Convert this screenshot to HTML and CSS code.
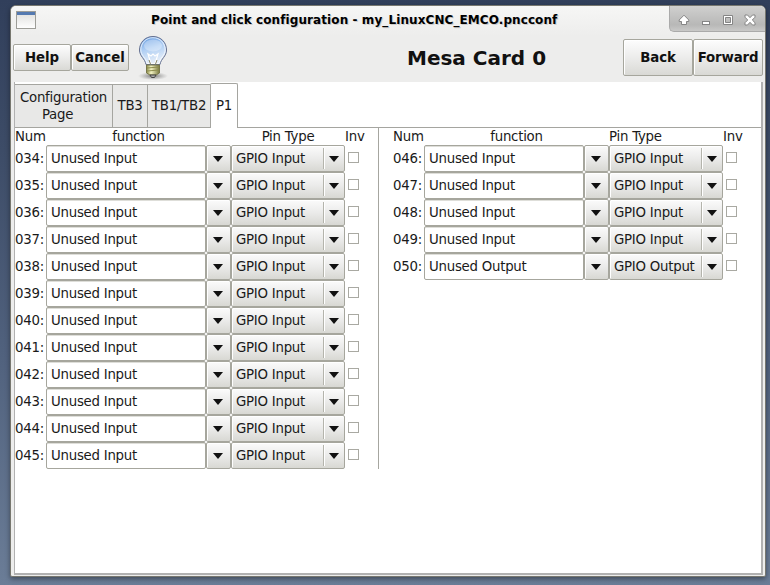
FILE: index.html
```html
<!DOCTYPE html>
<html lang="en">
<head>
<meta charset="utf-8">
<title>Point and click configuration</title>
<link rel="stylesheet" href="styles.css">
</head>
<body>
<div class="window">
  <header class="titlebar">
    <svg class="app-icon" width="20" height="18" viewBox="0 0 20 18">
      <defs><linearGradient id="app" x1="0" y1="0" x2="0" y2="1"><stop offset="0" stop-color="#dcdcda"/><stop offset="1" stop-color="#fff"/></linearGradient></defs>
      <rect x=".5" y=".5" width="19" height="17" fill="url(#app)" stroke="#9d9d98"/>
      <rect x="1" y="1" width="18" height="3" fill="#5479b0"/>
    </svg>
    <h1 class="title"><span>Point and click configuration - my_LinuxCNC_EMCO.pncconf</span></h1>
    <div class="controls">
      <svg width="96" height="26" viewBox="0 0 96 26" fill="#fff" stroke="#858585">
        <path d="M15 9.200 L19.800 14 V15.500 H17.500 V18.500 H12.500 V15.500 H10.200 V14 Z"/>
        <rect x="33.500" y="15.500" width="7" height="3"/>
        <path fill-rule="evenodd" d="M54.500 9.500h9v9h-9zM56.500 11.500v5h5v-5z"/>
        <path d="M76 9h2.500l2.500 2.700 2.500-2.700h2.500v2.200L83.300 14l2.700 2.700V19h-2.500L81 16.300 78.500 19H76v-2.300L78.700 14 76 11.200z"/>
      </svg>
    </div>
  </header>
  <div class="toolbar">
    <button class="btn help">Help</button>
    <button class="btn cancel">Cancel</button>
    <svg class="bulb" width="32" height="46" viewBox="0 0 32 46">
      <defs>
        <linearGradient id="glass" x1="0" y1="0" x2=".3" y2="1"><stop offset="0" stop-color="#5d96df"/><stop offset=".5" stop-color="#b0cff4"/><stop offset="1" stop-color="#e6eef8"/></linearGradient>
        <linearGradient id="base"><stop offset="0" stop-color="#8b8b49"/><stop offset=".35" stop-color="#f4f4c4"/><stop offset="1" stop-color="#77773f"/></linearGradient>
        <radialGradient id="shade"><stop offset="0" stop-color="#777"/><stop offset="1" stop-color="#999" stop-opacity="0"/></radialGradient>
      </defs>
      <ellipse cx="16" cy="41" rx="15" ry="4" fill="url(#shade)"/>
      <path d="M16 1.500C8 1.500 2.500 7.500 2.500 15C2.500 21.500 8 23.500 9 29.500H23C24 23.500 29.500 21.500 29.500 15C29.500 7.500 24 1.500 16 1.500Z" fill="url(#glass)" stroke="#65708f"/>
      <path d="M16 2.700C9 2.700 3.800 8 3.800 15C3.800 20.500 9 22.500 10 28.500H22C23 22.500 28.200 20.500 28.200 15C28.200 8 23 2.700 16 2.700Z" fill="none" stroke="#fff" stroke-opacity=".7"/>
      <ellipse cx="16" cy="10.500" rx="9" ry="6" fill="#fff" opacity=".3"/>
      <path d="M14 29L11 19L14 21L16 19L18 21L21 19L18 29" fill="none" stroke="#fff" stroke-width="1.200"/>
      <path d="M13.500 29L12 25M18.500 29L20 25" stroke="#8a8768"/>
      <path d="M9.500 30H22.500V38L19 40H13L9.500 38Z" fill="url(#base)" stroke="#77774a"/>
      <path d="M10 33L22 32M10 36L22 35" stroke="#8d8d4d"/>
      <path d="M13 40H19L17.500 42.500H14.500Z" fill="#aaa" stroke="#444"/>
    </svg>
    <h2 class="page-title"><span>Mesa Card 0</span></h2>
    <button class="btn back">Back</button>
    <button class="btn forward">Forward</button>
  </div>
  <main class="notebook">
    <nav class="tabs">
      <div class="tab config">Configuration<br>Page&nbsp; &nbsp;</div>
      <div class="tab tb3">TB3</div>
      <div class="tab tb12">TB1/TB2</div>
      <div class="tab active">P1</div>
      <div class="rest"></div>
    </nav>
    <div class="pages">
      <section class="pins" data-first="34" data-count="12"></section>
      <section class="pins second" data-first="46" data-count="5"></section>
    </div>
  </main>
</div>
<script src="pins.js"></script>
</body>
</html>
```
FILE: styles.css
```css
* { box-sizing: border-box; }
body {
  margin: 0;
  width: 770px;
  height: 585px;
  overflow: hidden;
  padding: 5px 0 0 10px;
  background: linear-gradient(180deg, #313f5b 0, #3d4c67 150px, #50617d 350px, #6b7d97 585px);
  font: 13.330px/17px "DejaVu Sans", sans-serif;
  letter-spacing: -.25px;
  color: #1a1a1a;
}
.window {
  width: 756px;
  height: 572px;
  border: 1px solid #77776f;
  border-radius: 6px 6px 2px 2px;
  background: #ededec;
  box-shadow: 0 2px 5px rgba(0, 0, 0, .4);
  overflow: hidden;
}
.titlebar {
  display: flex;
  height: 30px;
  background: linear-gradient(#f6f6f5, #ededec);
}
.app-icon { margin: 5px 0 0 5px; flex: none; }
.title {
  flex: 1;
  margin: 0;
  padding: 6px 0 0 115px;
  font-size: 12px;
  line-height: 17px;
  letter-spacing: .09px;
  white-space: nowrap;
  color: #000;
  text-shadow: 1px 1px #ccc;
}
.controls {
  width: 96px;
  height: 26px;
  flex: none;
  background: linear-gradient(#d0d0cf, #b8b8b7 75%, #c9c9c8);
  border: solid #aaa;
  border-width: 0 0 1px 1px;
  border-radius: 0 0 0 5px;
}
.controls svg { display: block; margin-left: -1px; }
.toolbar { display: flex; height: 46px; padding-left: 2px; }
.btn {
  font: bold 13.330px/17px "DejaVu Sans", sans-serif;
  letter-spacing: -.08px;
  color: #111;
  padding: 0;
  border: 1px solid #a6a69d;
  border-radius: 2px;
  background: linear-gradient(#fdfdfd, #ececeb 50%, #d9d9d5);
  box-shadow: inset 1px 1px #fff;
  flex: none;
}
.help, .cancel { width: 58px; height: 27px; margin-top: 8px; }
.bulb { margin: -1px 0 0 8px; flex: none; }
.page-title {
  flex: 1;
  margin: 0;
  padding: 9px 0 0 238px;
  font-size: 20px;
  line-height: 26px;
  letter-spacing: 0;
  white-space: nowrap;
  color: #111;
}
.back, .forward { height: 37px; margin-top: 3px; width: 70px; letter-spacing: -.15px; }
.forward { margin-right: 2px; }
.notebook {
  height: 493px;
  margin: 0 2px 0 3px;
  background: #fff;
  border: solid #b1b1b1;
  border-width: 0 2px 2px 1px;
}
.tabs { display: flex; height: 46px; align-items: flex-end; }
.tab {
  height: 44px;
  border: solid #a5a5a0;
  border-width: 1px 0 1px 1px;
  background: #e8e8e7;
  display: flex;
  align-items: center;
  justify-content: center;
  text-align: center;
}
.config { width: 97px; border-left: 0; }
.tb3 { width: 35px; }
.tb12 { width: 63px; }
.tab.active { width: 28px; height: 45px; background: #fff; border-width: 1px 1px 0 1px; border-radius: 2px 2px 0 0; padding-bottom: 2px; }
.tab { padding-bottom: 1px; }
.rest { flex: 1; align-self: stretch; border-bottom: 1px solid #a5a5a0; }
.pages { display: flex; }
.pins { width: 364px; height: 341px; border-right: 1px solid #a6a6a0; }
.second { width: 370px; border: 0; padding-left: 14px; }
.heads, .row { display: grid; grid-template-columns: 31px 160px 25px 114px 20px; }
.heads { height: 17px; white-space: nowrap; }
.heads .fn { grid-column: 2 / 4; text-align: center; }
.heads .type { text-align: center; }
.second .heads .type { text-align: left; }
.row { height: 27px; align-items: stretch; }
.num { padding-top: 5px; }
.entry {
  border: 1px solid #a6a69d;
  border-radius: 2px;
  padding: 4px 4px 0;
  box-shadow: inset 0 1px #deded9;
}
.drop, .combo {
  border: 1px solid #a6a69d;
  border-radius: 2px;
  background: linear-gradient(#fbfbfb, #ebebea 50%, #d8d8d3);
  box-shadow: inset 1px 1px #fff;
  display: flex;
  align-items: center;
}
.drop { justify-content: center; }
.combo { padding-left: 4px; white-space: nowrap; }
.combo .label { width: 87px; }
.combo .arrow-cell { height: 21px; flex: 1; border-left: 1px solid #b4b4ac; display: flex; align-items: center; justify-content: center; box-shadow: inset 1px 0 #fff; }
.arrow { border: solid transparent; border-width: 6px 5.500px 0; border-top-color: #111; margin: 1px 1px 0 0; }
.check { width: 11px; height: 11px; margin: 7px 0 0 3px; border: 1px solid #a9a9a2; background: #fff; }
```
FILE: pins.js
```js
document.querySelectorAll('.pins').forEach(function (section) {
  const first = Number(section.dataset.first);
  const count = Number(section.dataset.count);
  let html = '<div class="heads"><span>Num</span><span class="fn">function</span><span class="type">Pin Type</span><span class="inv">Inv</span></div>';
  for (let n = first; n < first + count; n++) {
    const kind = n === 50 ? 'Output' : 'Input';
    html += `<div class="row"><span class="num">0${n}:</span><div class="entry">Unused ${kind}</div>` +
      '<div class="drop"><i class="arrow"></i></div>' +
      `<div class="combo"><span class="label">GPIO ${kind}</span><span class="arrow-cell"><i class="arrow"></i></span></div>` +
      '<div class="check"></div></div>';
  }
  section.innerHTML = html;
});
```
